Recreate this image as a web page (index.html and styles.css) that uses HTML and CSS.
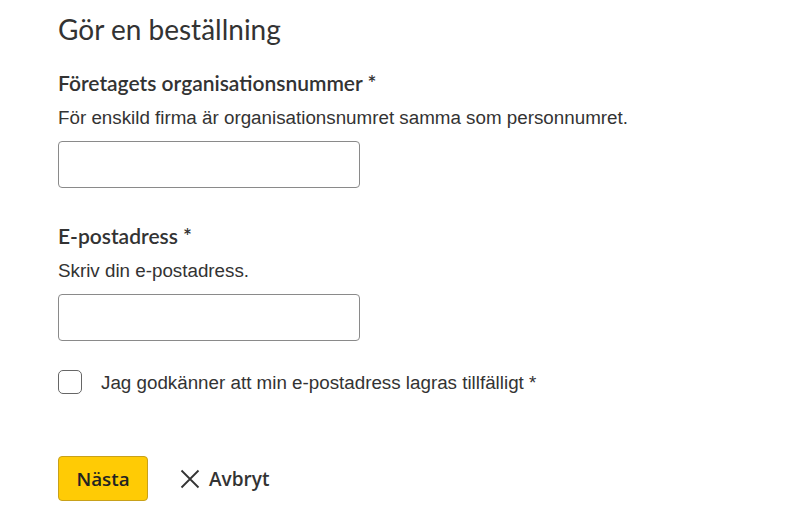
FILE: index.html
```html
<!DOCTYPE html>
<html lang="sv">
<head>
<meta charset="utf-8">
<link rel="stylesheet" href="styles.css">
</head>
<body>
<main class="page">
  <h1 class="title">Gör en beställning</h1>
  <div class="field">
    <label class="label" for="org">Företagets organisationsnummer *</label>
    <p class="hint">För enskild firma är organisationsnumret samma som personnumret.</p>
    <input class="input" id="org" type="text">
  </div>
  <div class="field field-second">
    <label class="label" for="mail">E-postadress *</label>
    <p class="hint">Skriv din e-postadress.</p>
    <input class="input" id="mail" type="text">
  </div>
  <label class="check">
    <span class="box"></span>
    <span class="check-text">Jag godkänner att min e-postadress lagras tillfälligt *</span>
  </label>
  <div class="actions">
    <button class="btn-primary" type="button">Nästa</button>
    <button class="btn-cancel" type="button">
      <svg class="x-icon" width="20" height="20" viewBox="0 0 20 20"><path d="M1.5 1.5 L18.5 18.5 M18.5 1.5 L1.5 18.5" stroke="#333" stroke-width="1.8" fill="none"/></svg>
      <span>Avbryt</span>
    </button>
  </div>
</main>
</body>
</html>
```
FILE: styles.css
```css
* { box-sizing: border-box; }
html, body { margin: 0; padding: 0; background: #fff; }
body { color: #333; font-family: "Liberation Sans", Arial, sans-serif; }
.page { padding: 11px 58px 0 58px; display: flex; flex-direction: column; }
.title { font-family: Lato, sans-serif; font-weight: 400; font-size: 28px; line-height: 36px; margin: 0 0 24px 0; color: #333; }
.field { display: flex; flex-direction: column; }
.field-second { margin-top: 36px; }
.label { font-family: Lato, sans-serif; font-weight: 600; font-size: 21px; line-height: 24px; color: #333; }
.hint { margin: 12px 0 0 0; font-size: 18.8px; line-height: 22px; color: #333; }
.input { margin-top: 12px; width: 302px; height: 47px; border: 1px solid #8a8a8a; border-radius: 4px; background: #fff; font-size: 16px; }
.check { display: flex; align-items: center; gap: 19px; margin-top: 29px; cursor: pointer; }
.box { width: 24px; height: 24px; border: 1.5px solid #666; border-radius: 5px; flex: none; }
.check-text { font-size: 18.8px; line-height: 22px; color: #333; padding-top: 2px; }
.actions { display: flex; align-items: center; gap: 32px; margin-top: 62px; }
.btn-primary { width: 90px; height: 45px; background: #ffcb05; border: 1px solid #c8a11a; border-radius: 4px; font-family: "Open Sans", sans-serif; font-weight: 600; font-size: 18.8px; color: #222; padding: 0; }
.btn-cancel { display: flex; align-items: center; gap: 9px; background: none; border: 0; padding: 0; font-family: "Open Sans", sans-serif; font-weight: 600; font-size: 19px; color: #333; }
.x-icon { display: block; }
```
